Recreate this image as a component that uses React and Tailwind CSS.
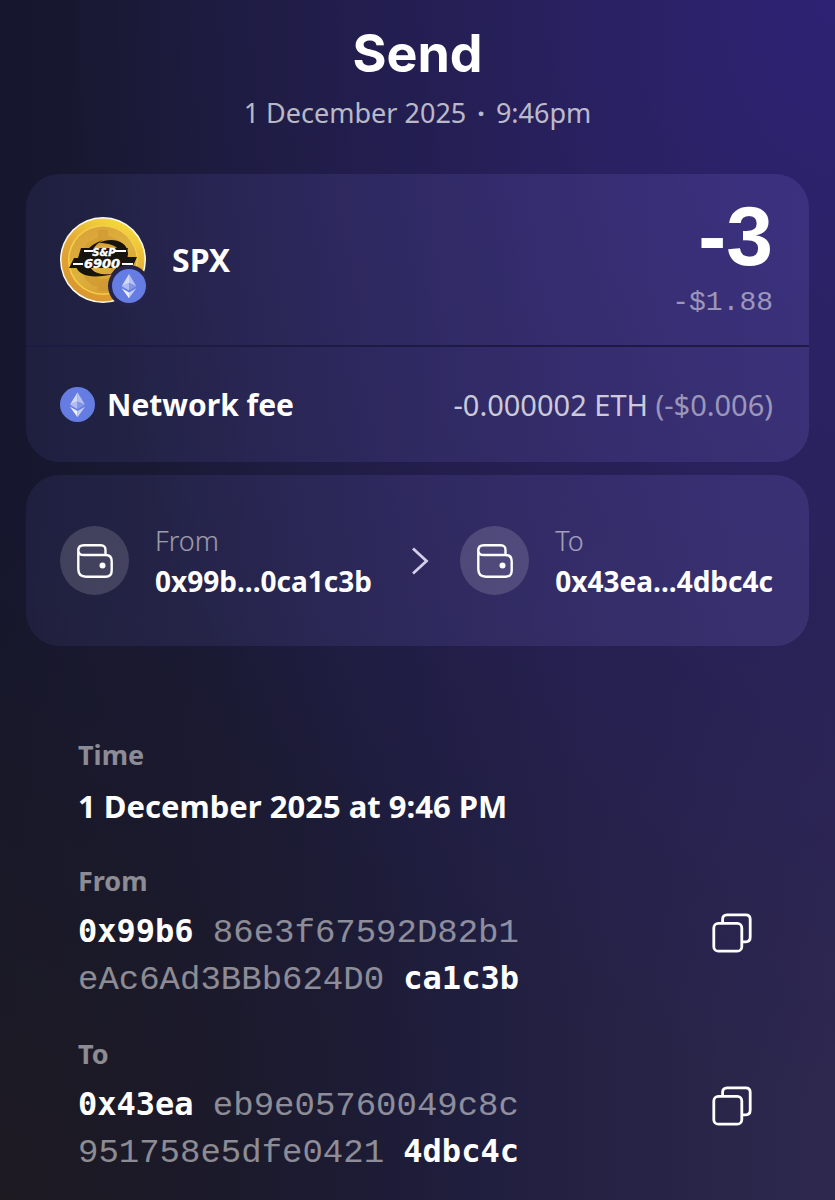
import React, { useState } from 'react';

const EthIcon = ({ className }) => (
    <svg viewBox="0 0 34 34" className={className} aria-hidden="true">
        <circle cx="17" cy="17" r="17" fill="#657de2" />
        <path d="M17 5 L9.7 17.3 L17 14 Z" fill="#d3daf8" />
        <path d="M17 5 L24.3 17.3 L17 14 Z" fill="#b5c0f3" />
        <path d="M9.7 17.3 L17 14 V21.6 Z" fill="#b0bcf3" />
        <path d="M24.3 17.3 L17 14 V21.6 Z" fill="#8496e8" />
        <path d="M9.7 19.2 L17 23.4 V29.3 Z" fill="#eef1fd" />
        <path d="M24.3 19.2 L17 23.4 V29.3 Z" fill="#c3ccf6" />
    </svg>
);

const CoinIcon = ({ className }) => (
    <svg viewBox="0 0 86 86" className={className} aria-hidden="true">
        <defs>
            <linearGradient id="rim" x1="0.8" y1="0" x2="0.3" y2="1">
                <stop offset="0" stopColor="#f7e03a" />
                <stop offset="0.5" stopColor="#e3a838" />
                <stop offset="1" stopColor="#d9952f" />
            </linearGradient>
            <linearGradient id="face" x1="0.2" y1="0" x2="0.8" y2="1">
                <stop offset="0" stopColor="#d9a138" />
                <stop offset="0.5" stopColor="#deb23d" />
                <stop offset="1" stopColor="#d49a31" />
            </linearGradient>
        </defs>
        <circle cx="43" cy="43" r="43" fill="#fffbea" />
        <circle cx="43" cy="43" r="41.5" fill="url(#rim)" />
        <circle cx="43" cy="43" r="35" fill="#f3cf4b" />
        <circle cx="43" cy="43" r="33.5" fill="url(#face)" />
        <path d="M38 13h10v6q11 2 14 11l-9 4q-3-6-10-6-9 0-9 6 0 5 11 7 18 3 18 15 0 11-15 14v4H38v-4q-12-3-15-13l9-3q3 8 12 8 9 0 9-6 0-5-11-7-18-3-18-15 0-9 14-13z" fill="#c98d2c" opacity="0.4" />
        <path d="M39 26 C50 20 67 23 68 36 C68 47 60 54 50 58 C58 50 63 43 60 35 C57 28 48 26 39 26 Z" fill="#17130d" />
        <path d="M43 23 C34 26 27 31 25 38 L31 37 C32 32 36 27 43 23 Z" fill="#17130d" />
        <path d="M16 49 C18 59 33 62 54 57 C42 58 33 57 30 49 Z" fill="#17130d" />
        <path d="M9 51 L14 41 H18 L21 31 H68 L65 40 H77 L72 51 Z" fill="#17130d" />
        <g fill="#ffffff" stroke="#ffffff" strokeWidth="0.4" fontFamily="'DejaVu Sans', sans-serif" fontWeight="700" fontStyle="italic" textAnchor="middle">
            <text x="44" y="38.5" fontSize="10">S&amp;P</text>
            <text x="42" y="51" fontSize="13">6900</text>
        </g>
        <path d="M24 34 H33 M55 34 H66 M13 47 H23 M62 47 H73" stroke="#ffffff" strokeWidth="2" />
    </svg>
);

const WalletIcon = () => (
    <svg viewBox="0 0 36 34" className="w-9" fill="none" stroke="#ffffff" strokeWidth="2.4" strokeLinejoin="round" aria-hidden="true">
        <path d="M28.5 11 V6 Q28.5 1.3 23.8 1.3 H7 Q1.3 1.3 1.3 6.5 V25 Q1.3 32.7 9 32.7 H28.5 Q34.7 32.7 34.7 26.5 V17.2 Q34.7 11 28.5 11 H7 Q1.3 11 1.3 6.2" />
        <circle cx="25.5" cy="21.5" r="3" fill="#ffffff" stroke="none" />
    </svg>
);

const CopyIcon = () => (
    <svg viewBox="0 0 40 40" className="w-10 h-10" fill="none" stroke="#ffffff" strokeWidth="2.8" aria-hidden="true">
        <rect x="1.8" y="10.4" width="28" height="27.8" rx="4.5" />
        <path d="M10.6 10.4 V6.3 Q10.6 1.8 15.1 1.8 H33.7 Q38.2 1.8 38.2 6.3 V24.3 Q38.2 28.8 33.7 28.8 H29.8" />
    </svg>
);

const Party = ({ label, address }) => (
    <div className="flex items-center gap-[26px]">
        <div className="w-[69px] h-[69px] rounded-full bg-[#ffffff26] flex items-center justify-center">
            <WalletIcon />
        </div>
        <div>
            <p className="text-[27px] leading-[40px] font-light text-white/55">{label}</p>
            <p className="text-[28px] leading-[40px] font-bold">{address}</p>
        </div>
    </div>
);

const AddressRow = ({ label, first, lines, last }) => {
    const [copied, setCopied] = useState(false);

    const copy = () => {
        navigator.clipboard?.writeText(first + lines.join('') + last);
        setCopied(true);
    };

    return (
        <div>
            <h2 className="text-[27px] leading-[40px] font-bold text-white/50">{label}</h2>
            <div className="flex justify-between items-start mt-[9px]">
                <p className="font-['Liberation_Mono',monospace] text-[34px] leading-[47px] text-white/50">
                    <span className="font-['DejaVu_Sans_Mono',monospace] text-[32px] leading-none font-bold text-white">{first} </span>
                    {lines[0]}
                    <br />
                    {lines[1]}
                    <span className="font-['DejaVu_Sans_Mono',monospace] text-[32px] leading-none font-bold text-white"> {last}</span>
                </p>
                <button onClick={copy} aria-label={copied ? 'Copied' : `Copy ${label} address`} className="mt-[3px] cursor-pointer">
                    <CopyIcon />
                </button>
            </div>
        </div>
    );
};

const App = () => {
    return (
        <main className="min-h-screen overflow-hidden font-['Noto_Sans',sans-serif] text-white bg-[radial-gradient(ellipse_at_0%_100%,#1d1a22_0%,transparent_40%),radial-gradient(ellipse_at_100%_0%,#2d2274_0%,#271f60a0_35%,transparent_65%),linear-gradient(90deg,#16172e,#1e1d3c_50%,#2e284e)]">
            {/* Header */}
            <header className="pt-6 text-center">
                <h1 className="font-['Inter',sans-serif] text-[52px] leading-[60px] font-bold">Send</h1>
                <p className="mt-2 text-[27px] leading-[42px] text-white/70">
                    1 December 2025 <span className="mx-1 font-bold">·</span> 9:46pm
                </p>
            </header>

            {/* Amount and fee */}
            <section className="mt-10 mx-[26px] rounded-[34px] bg-linear-to-r from-[#8080ff14] to-[#6658b444] overflow-hidden">
                <div className="h-[171px] pl-[34px] pr-9 flex items-center justify-between">
                    <div className="flex items-center gap-[26px]">
                        <div className="relative">
                            <CoinIcon className="w-[86px] h-[86px]" />
                            <div className="absolute -right-1 -bottom-1 rounded-full bg-[#26244d] p-1">
                                <EthIcon className="w-[34px] h-[34px]" />
                            </div>
                        </div>
                        <p className="text-[32px] leading-[40px] font-bold">SPX</p>
                    </div>
                    <div className="text-right">
                        <p className="font-['Liberation_Sans',sans-serif] text-[84px] leading-[86px] font-bold">-3</p>
                        <p className="font-['Liberation_Mono',monospace] text-[28px] leading-[48px] text-white/50">-$1.88</p>
                    </div>
                </div>
                <div className="h-[117px] pl-[34px] pr-9 border-t-2 border-[#1d1a44] flex items-center justify-between">
                    <div className="flex items-center gap-3">
                        <EthIcon className="w-[35px] h-[35px]" />
                        <p className="text-[30px] leading-[40px] font-bold">Network fee</p>
                    </div>
                    <p className="text-[29px] leading-[40px] text-white/75">
                        -0.000002 ETH <span className="text-white/50">(-$0.006)</span>
                    </p>
                </div>
            </section>

            {/* Transfer direction */}
            <section className="mt-[13px] mx-[26px] h-[171px] pl-[34px] pr-9 rounded-[34px] bg-linear-to-r from-[#8080ff14] to-[#6658b444] flex items-center justify-between">
                <Party label="From" address="0x99b...0ca1c3b" />
                <svg viewBox="0 0 18 28" className="ml-2 w-[18px] h-7" fill="none" stroke="#d2cfea" strokeWidth="2.8" aria-hidden="true">
                    <path d="M2 1.5 L15.5 14 L2 26.5" />
                </svg>
                <Party label="To" address="0x43ea...4dbc4c" />
            </section>

            {/* Details */}
            <section className="mt-[89px] pl-[78px] pr-[83px] pb-4 flex flex-col gap-[30px]">
                <div className="pb-1">
                    <h2 className="text-[27px] leading-[40px] font-bold text-white/50">Time</h2>
                    <p className="mt-[10px] text-[31px] leading-[42px] font-bold">1 December 2025 at 9:46 PM</p>
                </div>
                <AddressRow label="From" first="0x99b6" lines={['86e3f67592D82b1', 'eAc6Ad3BBb624D0']} last="ca1c3b" />
                <AddressRow label="To" first="0x43ea" lines={['eb9e05760049c8c', '951758e5dfe0421']} last="4dbc4c" />
            </section>
        </main>
    );
};

export default App;
